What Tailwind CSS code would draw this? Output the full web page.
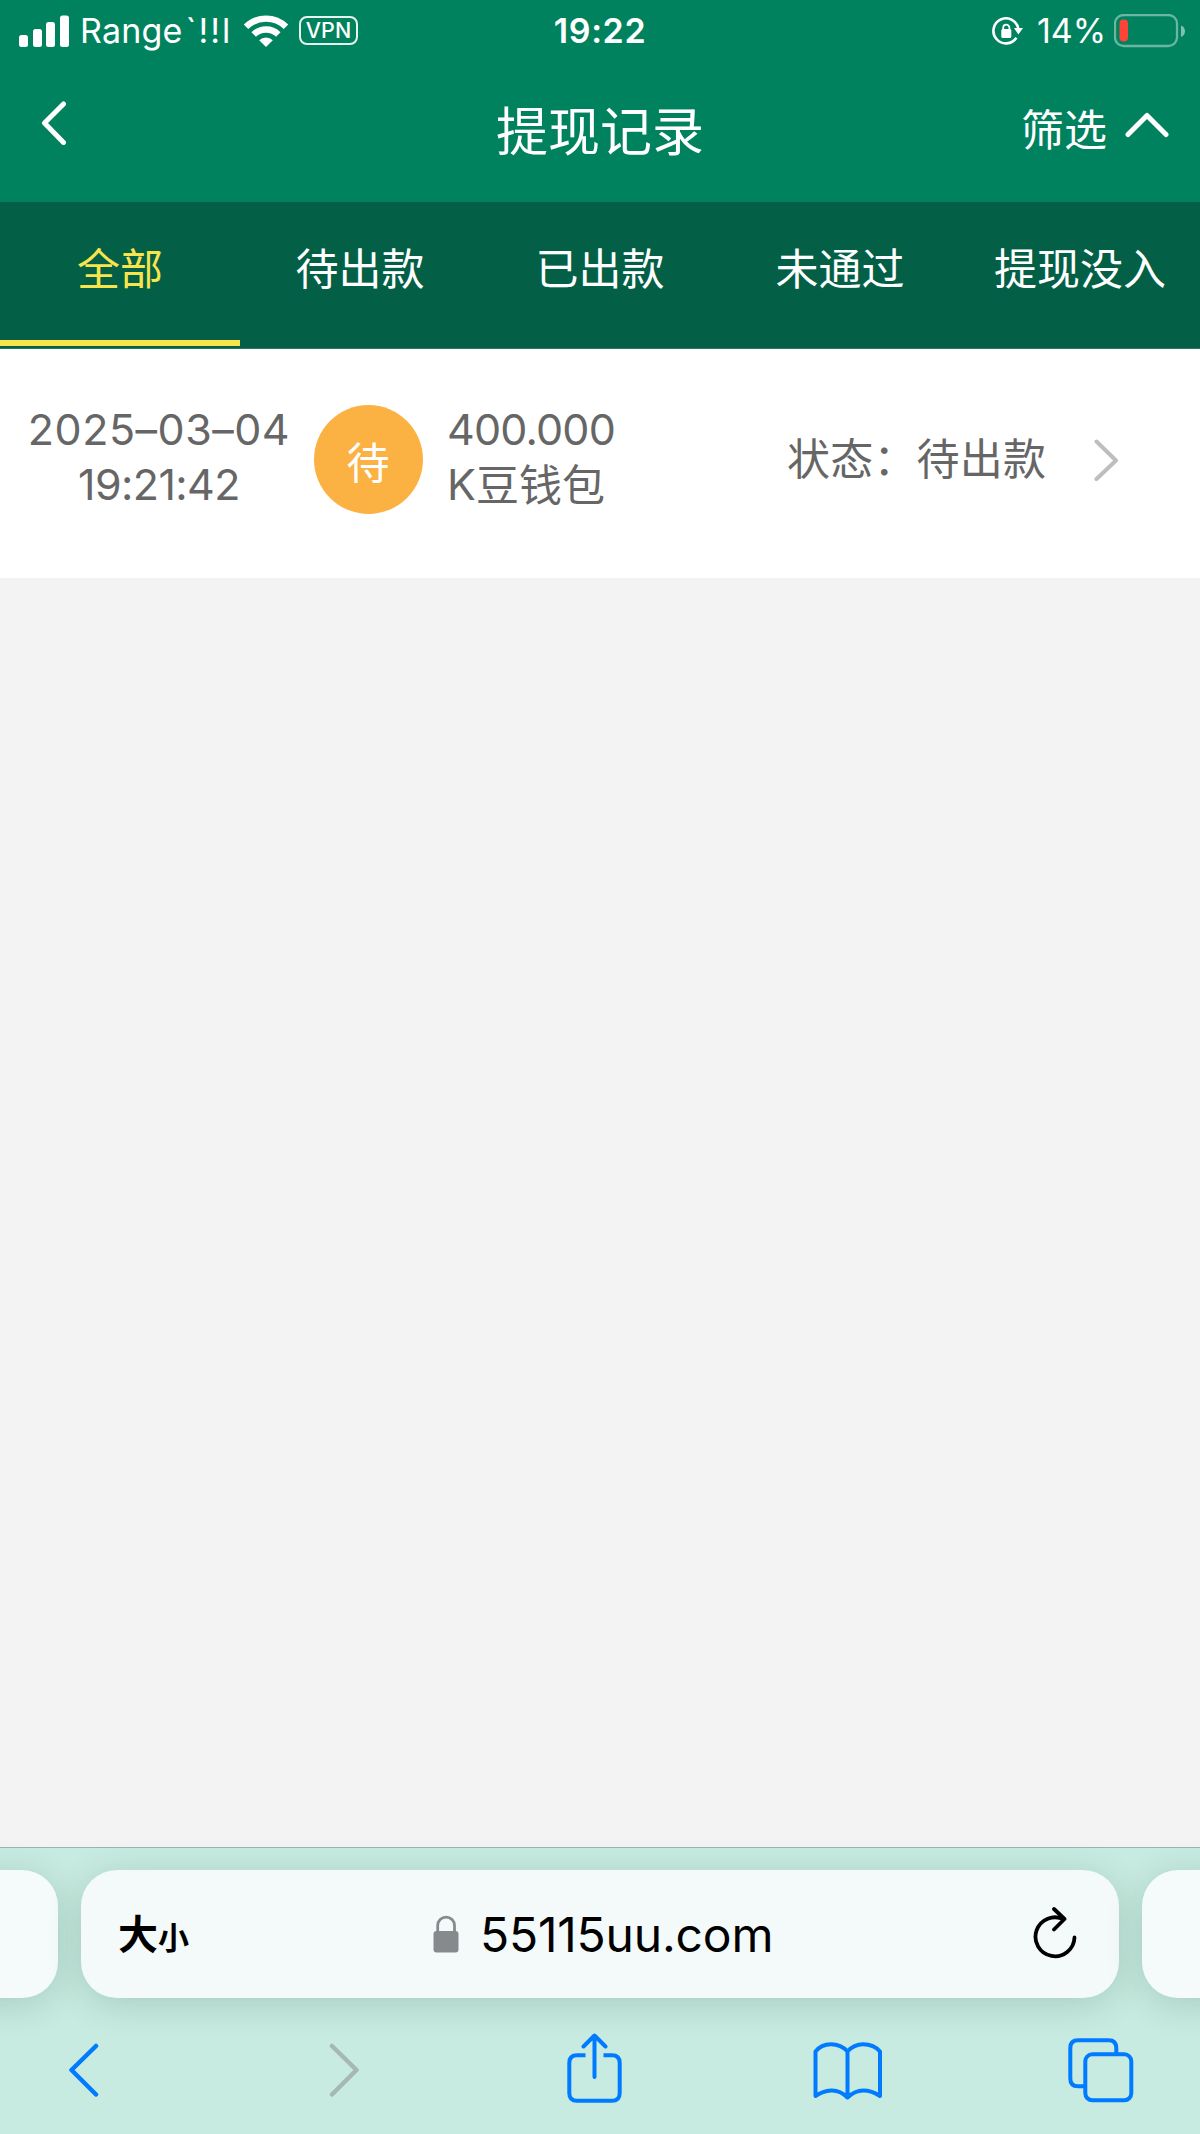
<!DOCTYPE html>
<html lang="zh-CN">
<head>
<meta charset="utf-8">
<title>提现记录</title>
<script src="https://cdn.jsdelivr.net/npm/@tailwindcss/browser@4"></script>
</head>
<body>
<div class="flex h-[2134px] w-[1200px] flex-col overflow-hidden bg-[#f3f3f3] font-['Inter','Noto_Sans_CJK_SC',sans-serif]">
  <header class="h-[202px] shrink-0 bg-[#01825e] text-white">
    <!-- status bar -->
    <div class="grid h-[60px] grid-cols-[1fr_auto_1fr] items-center pl-[19px] pr-[15px]">
      <div class="flex items-center">
        <svg class="h-[32px] w-[50px]" viewBox="0 0 50 32" fill="currentColor"><rect x="0" y="20" width="9" height="12" rx="2.5"/><rect x="14" y="14" width="9" height="18" rx="2.5"/><rect x="27" y="7" width="9" height="25" rx="2.5"/><rect x="41" y="0.5" width="9" height="31.5" rx="2.5"/></svg>
        <span class="ml-[11px] w-[151px] whitespace-nowrap pt-px text-[34px] leading-[60px] tracking-[0.2px]">Range<span class="ml-[3px] tracking-[2px]">`!!l</span></span>
        <svg class="ml-[12px] h-[34px] w-[46px]" viewBox="0 0 46 34"><g fill="none" stroke="currentColor" stroke-width="6.4"><path d="M3 12.8a28.5 28.5 0 0 1 40 0"/><path d="M10.7 20.5a17.6 17.6 0 0 1 24.6 0"/></g><path d="M23 33 16.2 26.3a9.7 9.7 0 0 1 13.6 0Z" fill="currentColor"/></svg>
        <span class="ml-[10px] flex h-[29px] w-[59px] items-center justify-center rounded-[8px] border-2 border-white/90 text-[21.5px] font-medium">VPN</span>
      </div>
      <span class="mr-[4px] pt-px text-[34px] font-semibold leading-[60px] tracking-[0.6px]">19:22</span>
      <div class="flex items-center justify-end">
        <svg class="h-[28px] w-[31px]" viewBox="0 0 31 28"><path d="M24.4 20.7A12.5 12.5 0 1 1 26.3 12" fill="none" stroke="currentColor" stroke-width="2.6"/><path d="M22 11h9l-4.6 6.5Z" fill="currentColor"/><rect x="9.3" y="12" width="10" height="9" rx="1.5" fill="currentColor"/><path d="M11.2 13v-2.2a3.1 3.1 0 0 1 6.2 0V13" fill="none" stroke="currentColor" stroke-width="1.8"/></svg>
        <span class="ml-[14px] w-[69px] whitespace-nowrap pt-px text-[34px] leading-[60px]">14%</span>
        <svg class="ml-[8px] h-[34px] w-[71px]" viewBox="0 0 71 34"><rect x="1" y="1" width="62" height="31" rx="8.5" fill="none" stroke="#fff" stroke-opacity=".42" stroke-width="2.3"/><path d="M67 11.500c5.300 2 5.300 9.500 0 11.500Z" fill="#fff" fill-opacity=".5"/><rect x="5.500" y="5.500" width="8.500" height="22" rx="4" fill="#ff4337"/></svg>
      </div>
    </div>
    <!-- title bar -->
    <div class="grid h-[142px] grid-cols-3 items-start pl-[41px] pr-[31px]">
      <svg class="mt-[41px] h-[44px] w-[25px]" viewBox="0 0 25 44" fill="none" stroke="currentColor" stroke-width="5" stroke-linecap="round" stroke-linejoin="round"><path d="M22.500 3 3.500 22 22.500 41.500"/></svg>
      <h1 class="mt-[38px] -ml-[10px] text-center text-[52px] font-normal leading-[70px]">提现记录</h1>
      <div class="mt-[36px] flex items-start justify-end">
        <span class="pt-px text-[43px] leading-[66px]">筛选</span>
        <svg class="ml-[18px] mt-[16px] h-[26px] w-[44px]" viewBox="0 0 44 26" fill="none" stroke="currentColor" stroke-width="5" stroke-linecap="round" stroke-linejoin="round"><path d="M3 22.500 22 3.500 41 22.500"/></svg>
      </div>
    </div>
  </header>
  <nav class="grid h-[147px] shrink-0 grid-cols-5 border-b border-[#2a7a60] bg-[#036046] text-center text-[43px] leading-[134px] text-white">
    <a class="h-[144px] border-b-[6px] border-[#f9e44c] text-[#f9e44c]">全部</a>
    <a>待出款</a>
    <a>已出款</a>
    <a>未通过</a>
    <a class="whitespace-nowrap">提现没入</a>
  </nav>
  <main class="grow">
    <article class="flex h-[229px] items-start bg-white text-[43px] leading-[55px] text-[#666]">
      <div class="ml-[19px] mt-[53px] w-[280px] whitespace-nowrap text-center"><span class="tracking-[0.5px]">2025–03–04</span><br><span class="tracking-[-0.6px]">19:21:42</span></div>
      <span class="ml-[15px] mt-[56px] flex size-[109px] items-center justify-center rounded-full bg-[#fbb243] pr-px pt-[7px] text-white">待</span>
      <div class="ml-[24px] mt-[53px] w-[200px] whitespace-nowrap"><span class="tracking-[-0.8px]">400.000</span><br>K<span class="inline-block translate-y-px">豆钱包</span></div>
      <div class="ml-[140px] mt-[83px] w-[259px] whitespace-nowrap tracking-[0.2px]">状态：待出款</div>
      <svg class="ml-[48px] mt-[90px] h-[42px] w-[25px]" viewBox="0 0 25 42" fill="none" stroke="#bebebe" stroke-width="4" stroke-linecap="round" stroke-linejoin="round"><path d="M2.500 2.500 22 21.500 2.500 40"/></svg>
    </article>
  </main>
  <footer class="h-[287px] shrink-0 border-t border-[#9bb5ad] bg-[#c7ebe0]">
    <div class="mt-[22px] -mx-[100px] flex h-[128px] gap-[23px]">
      <div class="w-[158px] rounded-[36px] bg-[#f5fbfa] shadow-[0_6px_36px_rgba(0,50,30,0.16)]"></div>
      <div class="flex w-[1038px] items-center rounded-[36px] bg-[#f4fafa] pl-[37px] pr-[42px] text-black shadow-[0_6px_36px_rgba(0,50,30,0.16)]">
        <span class="w-[90px] whitespace-nowrap pt-[4px] text-[40px] font-bold leading-[60px]">大<span class="text-[31px]">小</span></span>
        <div class="ml-[225px] flex items-center">
          <svg class="h-[38px] w-[26px]" viewBox="0 0 26 38"><rect x="0.500" y="16" width="25" height="21.500" rx="3" fill="#868a8c"/><path d="M4.700 17v-6.500a8.400 8.400 0 0 1 16.800 0V17" fill="none" stroke="#868a8c" stroke-width="2.800"/></svg>
          <span class="ml-[21px] w-[295px] whitespace-nowrap pt-[2px] text-[48px] leading-[60px] tracking-[-0.2px]">55115uu.com</span>
        </div>
        <svg class="ml-auto -mt-[4px] h-[54px] w-[44px]" viewBox="0 0 44 54" fill="none" stroke="currentColor" stroke-width="3.800" stroke-linecap="round" stroke-linejoin="round"><path d="M41.500 32.500A19.500 19.500 0 1 1 31 14.500M21 4 31.500 14 21 24.500"/></svg>
      </div>
      <div class="w-[158px] rounded-[36px] bg-[#f5fbfa] shadow-[0_6px_36px_rgba(0,50,30,0.16)]"></div>
    </div>
    <div class="flex items-start text-[#007aff]">
      <svg class="ml-[68px] mt-[45px] h-[54px] w-[32px]" viewBox="0 0 32 54" fill="none" stroke="currentColor" stroke-width="4.500" stroke-linecap="round" stroke-linejoin="round"><path d="M28 3 3.500 27 28 51.500"/></svg>
      <svg class="ml-[229px] mt-[45px] h-[54px] w-[32px]" viewBox="0 0 32 54" fill="none" stroke="#a5b8b2" stroke-width="4.500" stroke-linecap="round" stroke-linejoin="round"><path d="M3 3 27.500 27 3 51.500"/></svg>
      <svg class="ml-[205px] mt-[35px] h-[70px] w-[56px]" viewBox="0 0 56 70" fill="none" stroke="currentColor" stroke-width="4" stroke-linejoin="round"><path d="M19.500 22.300H11Q3.300 22.300 3.300 30V60Q3.300 67.800 11 67.800H46Q53.700 67.800 53.700 60V30Q53.700 22.300 46 22.300H37.500"/><path d="M28.500 44V3M17.500 13.500 28.500 2.500 39.500 13.500" stroke-linecap="round"/></svg>
      <svg class="ml-[190px] mt-[43px] h-[60px] w-[70px]" viewBox="0 0 70 60" fill="none" stroke="currentColor" stroke-width="4" stroke-linecap="round" stroke-linejoin="round"><path d="M35.500 10.500V56.500Q28 49 19 49.500 11 50 3.500 55V10.500Q9 3.500 19 3.300 29 3.300 35.500 10.500Q42 3.300 51 3.300 62 3.500 68 10.500V55Q60 49.500 51 49.500 43 49.500 35.500 56.500"/></svg>
      <svg class="ml-[186px] mt-[40px] h-[66px] w-[66px]" viewBox="0 0 66 66" fill="none" stroke="currentColor" stroke-width="4"><path d="M48.300 16V10Q48.300 2.300 40.500 2.300H10Q2.300 2.300 2.300 10V40.500Q2.300 48.300 10 48.300H17"/><rect x="17.300" y="16.300" width="46" height="46" rx="7"/></svg>
    </div>
  </footer>
</div>
</body>
</html>
